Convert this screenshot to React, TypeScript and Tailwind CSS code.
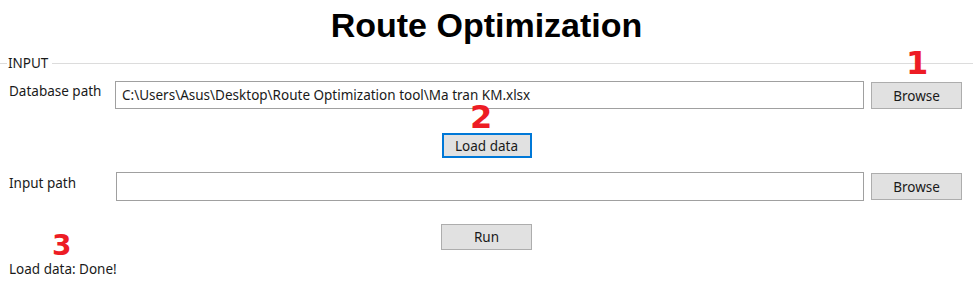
export default function App() {
  return (
    <div className="relative w-[973px] h-[293px] overflow-hidden bg-white font-['Noto_Sans',sans-serif] text-[13.5px] text-black">
      {/* Title */}
      <h1 className="pt-[6px] h-[50px] text-center font-['Liberation_Sans',Arial,sans-serif] text-[34px] leading-[38px] font-bold">
        Route Optimization
      </h1>

      {/* Group header */}
      <div className="mt-[6px] flex h-[14px] items-center">
        <div className="w-[7px] h-px bg-[#dcdcdc]" />
        <span className="px-[1px] leading-[14px] text-[#1a1a1a]">INPUT</span>
        <div className="ml-[3px] flex-1 h-px bg-[#dcdcdc]" />
      </div>

      {/* Database path */}
      <div className="mt-[11px] flex h-[28px] items-start">
        <span className="w-[115px] pl-[9px] pt-[1px] leading-[18px] text-[#1a1a1a]">Database path</span>
        <div className="w-[749px] h-[28px] border border-[#a0a0a0] px-[6px] flex items-center">
          <span className="leading-[18px] text-[#1a1a1a]">C:\Users\Asus\Desktop\Route Optimization tool\Ma tran KM.xlsx</span>
        </div>
        <button className="ml-[7px] mt-[1px] w-[91px] h-[27px] border border-[#adadad] bg-[#e1e1e1] text-[#1a1a1a] leading-[18px]">
          Browse
        </button>
      </div>

      {/* Load data */}
      <div className="mt-[24px] flex justify-center">
        <button className="w-[90px] h-[25px] border-2 border-[#0078d7] bg-[#e1e1e1] text-[#1a1a1a] leading-[18px]">
          Load data
        </button>
      </div>

      {/* Input path */}
      <div className="mt-[14px] flex h-[29px] items-start">
        <span className="w-[116px] pl-[9px] pt-[2px] leading-[18px] text-[#1a1a1a]">Input path</span>
        <div className="w-[748px] h-[29px] border border-[#a0a0a0]" />
        <button className="ml-[7px] mt-[1px] w-[91px] h-[27px] border border-[#adadad] bg-[#e1e1e1] text-[#1a1a1a] leading-[18px]">
          Browse
        </button>
      </div>

      {/* Run */}
      <div className="mt-[23px] flex justify-center">
        <button className="w-[91px] h-[26px] border border-[#adadad] bg-[#e1e1e1] text-[#1a1a1a] leading-[18px]">
          Run
        </button>
      </div>

      <div className="mt-[10px] pl-[9px] leading-[18px] text-[#1a1a1a]">Load data: Done!</div>

      {/* Annotations */}
      <span className="absolute left-[906px] top-[47px] font-['DejaVu_Sans',sans-serif] text-[32px] leading-none font-bold text-[#ed1c24]">1</span>
      <span className="absolute left-[470px] top-[101px] font-['DejaVu_Sans',sans-serif] text-[32px] leading-none font-bold text-[#ed1c24]">2</span>
      <span className="absolute left-[52px] top-[232px] font-['DejaVu_Sans',sans-serif] text-[28px] leading-none font-bold text-[#ed1c24]">3</span>
    </div>
  );
}
